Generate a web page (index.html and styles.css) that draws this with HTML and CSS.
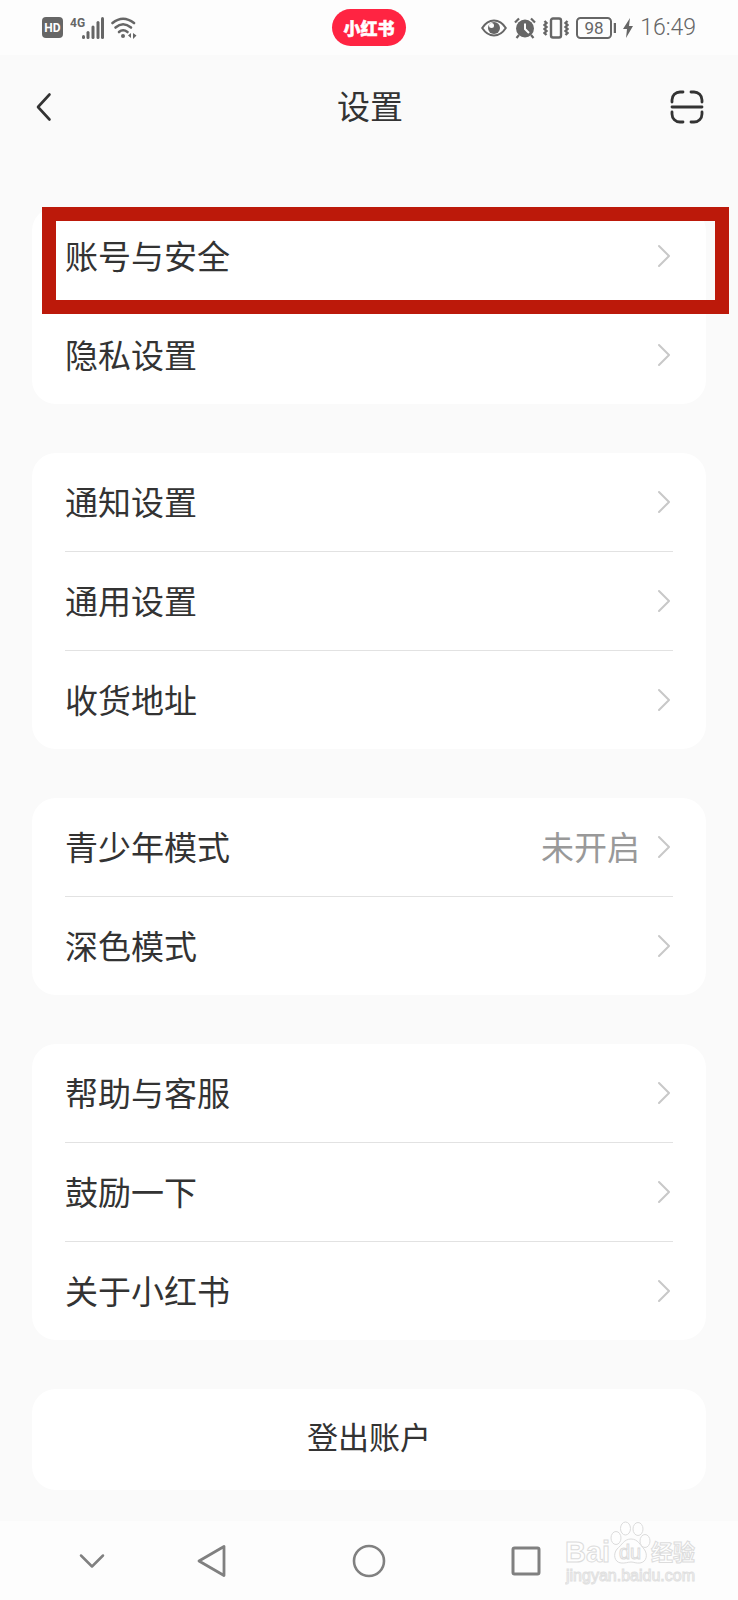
FILE: index.html
```html
<!DOCTYPE html>
<html lang="zh-CN">
<head>
    <meta charset="UTF-8">
    <meta name="viewport" content="width=device-width, initial-scale=1.0">
    <title>设置</title>
    <link rel="stylesheet" href="styles.css">
</head>
<body>
    <svg width="0" height="0" class="defs" aria-hidden="true">
        <symbol id="arrow" viewBox="0 0 14 24">
            <path d="M1 2 L11 12 L1 22" fill="none" stroke="#c8c8c8" stroke-width="2" stroke-linecap="round" stroke-linejoin="round"/>
        </symbol>
    </svg>

    <div class="status-bar">
        <div class="status-left">
            <svg width="21" height="21" viewBox="0 0 21 21">
                <rect width="21" height="21" rx="4" fill="#666"/>
                <text x="10.5" y="15" text-anchor="middle" class="hd-text">HD</text>
            </svg>
            <svg width="34" height="24" viewBox="0 0 34 24">
                <text x="0" y="11" class="net-text">4G</text>
                <g stroke="#666" stroke-width="3" stroke-linecap="round">
                    <path d="M13.5 20.5v1"/>
                    <path d="M18 16.5v5"/>
                    <path d="M23 11v10.5"/>
                    <path d="M28 6.5v15"/>
                    <path d="M32.5 2.5v19"/>
                </g>
            </svg>
            <svg width="26" height="24" viewBox="0 0 26 24" fill="none" stroke="#666" stroke-width="2.6" stroke-linecap="round">
                <path d="M1.5 7 Q12 -1.5 23 7"/>
                <path d="M4.5 11.5 Q12 5 20 11.5"/>
                <path d="M8 16 Q12 12.5 16.5 16"/>
                <circle cx="12" cy="20" r="2" fill="#666" stroke="none"/>
                <path d="M20 17v5l-3-2.5zM22 23v-6l3.500 2.500z" fill="#666" stroke="none"/>
            </svg>
        </div>
        <div class="brand">小红书</div>
        <div class="status-right">
            <svg width="26" height="18" viewBox="0 0 26 18">
                <path d="M1.2 9 Q6 1.5 13 1.5 T24.8 9 Q20 16.5 13 16.5 T1.2 9z" fill="none" stroke="#666" stroke-width="2"/>
                <circle cx="13" cy="9" r="6" fill="#666"/>
                <circle cx="10.5" cy="6.500" r="2.500" fill="#fdfdfd"/>
            </svg>
            <svg width="22" height="22" viewBox="0 0 22 22">
                <circle cx="11" cy="11.5" r="9" fill="#666"/>
                <path d="M1 5.5 L5 1.5 M21 5.5 L17 1.5 M5 18 L2.5 21 M17 18 L19.5 21" stroke="#666" stroke-width="2.2" fill="none"/>
                <path d="M11 6.5v5.5l4 4" stroke="#fdfdfd" stroke-width="2" fill="none"/>
            </svg>
            <svg width="26" height="22" viewBox="0 0 26 22" fill="none" stroke="#666">
                <rect x="8" y="1.5" width="10" height="19" rx="2" stroke-width="2.4"/>
                <path d="M1.5 4l2 2-2 2 2 2-2 2 2 2-2 2 2 2M24.500 4l-2 2 2 2-2 2 2 2-2 2 2 2-2 2" stroke-width="2.4"/>
            </svg>
            <svg width="40" height="22" viewBox="0 0 40 22">
                <rect x="1" y="1" width="34" height="20" rx="3.5" fill="none" stroke="#666" stroke-width="2"/>
                <path d="M39 6v10" stroke="#666" stroke-width="2.5"/>
                <text x="18" y="17" text-anchor="middle" class="battery-text">98</text>
            </svg>
            <svg width="10" height="20" viewBox="0 0 10 20">
                <path d="M7 0 L0 11h4L3 20l7-12H6z" fill="#666"/>
            </svg>
            <time>16:49</time>
        </div>
    </div>

    <header class="header">
        <button class="icon-btn" aria-label="返回">
            <svg width="16" height="30" viewBox="0 0 16 30">
                <path d="M13.5 2.5 L2 15 L13.5 27.5" fill="none" stroke="#333" stroke-width="2.6" stroke-linecap="round" stroke-linejoin="round"/>
            </svg>
        </button>
        <h1>设置</h1>
        <button class="icon-btn" aria-label="扫一扫">
            <svg width="34" height="34" viewBox="0 0 34 34" fill="none" stroke="#333" stroke-width="2.8" stroke-linecap="round">
                <path d="M2 12v-2a8 8 0 0 1 8-8h3"/>
                <path d="M21 2h3a8 8 0 0 1 8 8v2"/>
                <path d="M2 22v2a8 8 0 0 0 8 8h3"/>
                <path d="M21 32h3a8 8 0 0 0 8-8v-2"/>
                <path d="M2 17h30"/>
            </svg>
        </button>
    </header>

    <main class="settings">
        <nav class="card">
            <a class="row highlight" href="#">账号与安全<svg class="arrow"><use href="#arrow"/></svg></a>
            <a class="row" href="#">隐私设置<svg class="arrow"><use href="#arrow"/></svg></a>
        </nav>
        <nav class="card">
            <a class="row" href="#">通知设置<svg class="arrow"><use href="#arrow"/></svg></a>
            <a class="row" href="#">通用设置<svg class="arrow"><use href="#arrow"/></svg></a>
            <a class="row" href="#">收货地址<svg class="arrow"><use href="#arrow"/></svg></a>
        </nav>
        <nav class="card">
            <a class="row" href="#">青少年模式<span class="value">未开启</span><svg class="arrow"><use href="#arrow"/></svg></a>
            <a class="row" href="#">深色模式<svg class="arrow"><use href="#arrow"/></svg></a>
        </nav>
        <nav class="card">
            <a class="row" href="#">帮助与客服<svg class="arrow"><use href="#arrow"/></svg></a>
            <a class="row" href="#">鼓励一下<svg class="arrow"><use href="#arrow"/></svg></a>
            <a class="row" href="#">关于小红书<svg class="arrow"><use href="#arrow"/></svg></a>
        </nav>
        <button class="logout">登出账户</button>
    </main>

    <footer class="nav-bar">
        <button class="icon-btn" aria-label="隐藏导航栏">
            <svg width="26" height="16" viewBox="0 0 26 16">
                <path d="M2 2.5 L13 13.5 L24 2.5" fill="none" stroke="#808080" stroke-width="2.5" stroke-linecap="round" stroke-linejoin="round"/>
            </svg>
        </button>
        <button class="icon-btn" aria-label="返回上一页">
            <svg width="30" height="34" viewBox="0 0 30 34">
                <path d="M27 2.5v29L2 17z" fill="none" stroke="#808080" stroke-width="2.8" stroke-linejoin="round"/>
            </svg>
        </button>
        <button class="icon-btn" aria-label="主屏幕">
            <svg width="34" height="34" viewBox="0 0 34 34">
                <circle cx="17" cy="17" r="15" fill="none" stroke="#808080" stroke-width="2.6"/>
            </svg>
        </button>
        <button class="icon-btn" aria-label="最近任务">
            <svg width="30" height="30" viewBox="0 0 30 30">
                <rect x="2" y="2" width="26" height="26" rx="1.5" fill="none" stroke="#808080" stroke-width="3"/>
            </svg>
        </button>
        <svg class="watermark" width="134" height="66" viewBox="0 0 134 66">
            <g fill="#fefefe" stroke="#dcdcdc" stroke-width="1">
                <text x="0" y="41" class="wm-latin">Bai</text>
                <ellipse cx="51" cy="17" rx="5" ry="6.5"/>
                <ellipse cx="60.5" cy="7.500" rx="5" ry="6.5"/>
                <ellipse cx="73" cy="8" rx="5" ry="6.5"/>
                <ellipse cx="80" cy="20" rx="5" ry="6.5"/>
                <path d="M66 18c7 0 9 6 13 10 4 5 3 13-4 14-4 .5-6-1-9-1s-6 1.5-10 1c-7-1-8-9-4-14 5-4 7-10 14-10z"/>
                <text x="54" y="38" class="wm-du">du</text>
                <text x="86" y="39" class="wm-cjk">经验</text>
            </g>
            <text x="1" y="60" class="wm-url">jingyan.baidu.com</text>
        </svg>
    </footer>
</body>
</html>
```
FILE: styles.css
```css
* {
    box-sizing: border-box;
}
body {
    margin: 0;
    min-height: 100vh;
    display: flex;
    flex-direction: column;
    background-color: #fafafa;
    color: #333;
    font-family: "Noto Sans CJK SC", sans-serif;
    font-size: 33px;
    line-height: 48px;
}
svg {
    display: block;
    flex: none;
}
.defs {
    position: absolute;
}
button {
    border: none;
    background: none;
    padding: 0;
    color: inherit;
    font: inherit;
    cursor: pointer;
}

/* status bar */
.status-bar {
    display: grid;
    grid-template-columns: 1fr auto 1fr;
    align-items: center;
    height: 55px;
    padding: 0 42px;
    background-color: #fdfdfd;
}
.status-left,
.status-right {
    display: flex;
    align-items: center;
    gap: 7px;
}
.status-right {
    justify-content: flex-end;
}
.status-right time {
    color: #666;
    font-family: Roboto, sans-serif;
    font-size: 23px;
    font-weight: 300;
    line-height: 28px;
}
.brand {
    width: 74px;
    border-radius: 19px;
    background-color: #ff2442;
    color: #fff;
    font-size: 17px;
    font-weight: 900;
    line-height: 37px;
    text-align: center;
    -webkit-text-stroke: 0.5px #fff;
}
.hd-text {
    fill: #fff;
    font: bold 12px Roboto, sans-serif;
}
.net-text {
    fill: #666;
    font: bold 12px Roboto, sans-serif;
}
.battery-text {
    fill: #666;
    font: 17px Roboto, sans-serif;
}

/* title bar */
.header {
    display: flex;
    align-items: center;
    justify-content: space-between;
    height: 103px;
    padding: 0 34px 0 36px;
}
.header .icon-btn {
    width: 34px;
}
h1 {
    margin: 0;
    padding-bottom: 4px;
    font-size: 33px;
    font-weight: 400;
}
.icon-btn {
    display: flex;
    align-items: center;
}

/* settings list */
.settings {
    display: flex;
    flex-direction: column;
    flex: 1;
    gap: 49px;
    padding: 49px 32px 31px;
}
.card {
    padding: 0 33px;
    border-radius: 24px;
    background-color: #fff;
}
.row {
    display: flex;
    align-items: center;
    gap: 18px;
    height: 98px;
    padding-bottom: 3px;
    color: inherit;
    text-decoration: none;
}
.row + .row {
    height: 99px;
    border-top: 1px solid #e2e2e2;
}
.arrow {
    width: 14px;
    height: 24px;
    margin: 3px 1px 0 auto;
}
.value {
    margin-left: auto;
    color: #999;
}
.value + .arrow {
    margin-left: 0;
}
.highlight {
    position: relative;
}
.highlight::after {
    content: "";
    position: absolute;
    top: 0;
    right: -56px;
    bottom: -9px;
    left: -23px;
    border: 14px solid #bc190a;
}
.logout {
    height: 101px;
    padding-bottom: 8px;
    border-radius: 24px;
    background-color: #fff;
    font-size: 31px;
}

/* system navigation */
.nav-bar {
    position: relative;
    display: grid;
    grid-template-columns: 84px 1fr 1fr 1fr 134px;
    height: 80px;
    padding-left: 50px;
    background-color: #fdfdfd;
}
.nav-bar .icon-btn {
    justify-content: center;
}
.watermark {
    position: absolute;
    right: 39px;
    bottom: 14px;
}
.wm-latin {
    font: bold 29px "Liberation Sans", sans-serif;
}
.wm-du {
    font: 20px "Liberation Sans", sans-serif;
}
.wm-cjk {
    font: bold 22px "Noto Sans CJK SC", sans-serif;
}
.wm-url {
    fill: #fefefe;
    stroke: #e0e0e0;
    stroke-width: 1px;
    font: 16px "Liberation Sans", sans-serif;
}
```
